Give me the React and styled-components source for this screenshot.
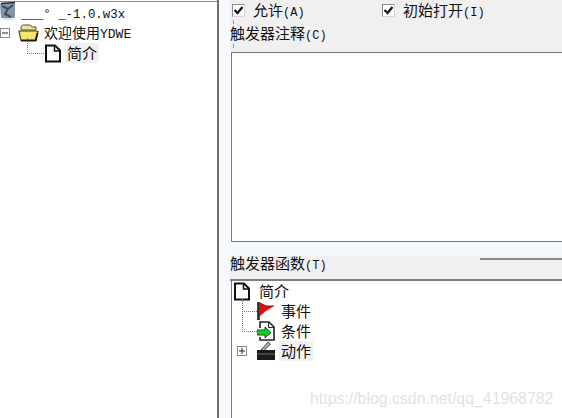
import React from 'react';
import styled, { createGlobalStyle } from 'styled-components';

const GlobalStyle = createGlobalStyle`
  html, body { margin: 0; padding: 0; background: #fff; }
  body { font-family: "Noto Sans CJK SC", "Liberation Mono", monospace; font-size: 15px; color: #111; }
`;

const Page = styled.div`
  position: relative;
  display: flex;
  width: 562px;
  height: 418px;
  overflow: hidden;
  background: #fff;
`;

const LeftPane = styled.div`
  width: 217px;
  height: 416px;
  margin-top: 1px;
  flex: none;
  box-sizing: border-box;
  padding-top: 1px;
  border-top: 1px solid #8a8a8a;
  background: #fff;
`;

const Divider = styled.div`
  width: 2px;
  flex: none;
  background: #6e6e6e;
`;

const Gutter = styled.div`
  width: 11px;
  flex: none;
  background: #f6f9fd;
`;

const RightPane = styled.div`
  flex: 1;
  min-width: 0;
  display: flex;
  flex-direction: column;
`;

const OptionsPanel = styled.div`
  height: 52px;
  flex: none;
  box-sizing: border-box;
  background: #f0f0f0;
`;

const CheckRow = styled.div`
  display: flex;
  height: 20px;
  align-items: center;
  padding-left: 2px;
`;

const CheckItem = styled.label`
  display: flex;
  align-items: center;
  width: 150px;
  gap: 8px;
`;

const Box = styled.span`
  width: 11px;
  height: 11px;
  flex: none;
  display: flex;
  border: 1px solid #8a8a8a;
  border-right-color: #d8d8d8;
  border-bottom-color: #d8d8d8;
  background: #fff;
`;

const Label = styled.span`
  display: block;
  height: 20px;
  line-height: 20px;
  white-space: nowrap;
`;

const Caption = styled(Label)`
  position: relative;
  margin-top: 3px;
  &::before,
  &::after {
    content: '';
    position: absolute;
    left: 3px;
    width: 1px;
    height: 4px;
    background: #9a9a9a;
  }
  &::before { top: -3px; }
  &::after { top: 21px; }
`;

const Notes = styled.div`
  height: 188px;
  flex: none;
  margin-left: 1px;
  border: 1px solid #7a7a7a;
  border-right: none;
  background: #fff;
`;

const LightStrip = styled.div`
  height: 14px;
  flex: none;
  background: #f5f8fd;
`;

const FunctionHeader = styled.div`
  height: 23px;
  flex: none;
  display: flex;
  align-items: flex-start;
  background: #f0f0f0;
  border-bottom: 2px solid #808080;
`;

const HeaderTitle = styled(Label)`
  margin-top: -3px;
`;

const HeaderRule = styled.div`
  width: 82px;
  height: 2px;
  margin-left: auto;
  margin-top: 2px;
  background: #8a8a8a;
`;

const FunctionTree = styled.div`
  flex: 1;
  margin-left: 1px;
  border-left: 1px solid #7a7a7a;
  background: #fff;
`;

const Row = styled.div`
  display: flex;
  align-items: center;
  height: 20px;
  padding-left: ${p => p.$indent || 0}px;
`;

const Text = styled.span`
  margin-left: ${p => p.$gap ?? 4}px;
  padding: 0 2px;
  line-height: 20px;
  white-space: nowrap;
  background: ${p => (p.$active ? '#f1f1f1' : 'transparent')};
`;

const Narrow = styled.span`
  font-size: 14px;
`;

const Latin = styled.span`
  font-family: "Liberation Mono", monospace;
  font-size: ${p => p.$size || 12}px;
`;

const Connector = styled.span`
  width: ${p => p.$w}px;
  height: ${p => p.$h}px;
  flex: none;
  align-self: flex-end;
  margin-bottom: 9px;
  border-left: 1px dotted #777;
  border-bottom: 1px dotted #777;
`;

const Expander = styled.span`
  width: 8px;
  height: 8px;
  flex: none;
  display: flex;
  align-items: center;
  justify-content: center;
  margin-right: ${p => p.$right || 0}px;
  border: 1px solid #888;
  background: #fff;
`;

const Watermark = styled.div`
  position: absolute;
  left: 310px;
  top: 389px;
  font-family: "Liberation Sans", Arial, sans-serif;
  font-size: 15.86px;
  line-height: 20px;
  color: #e3e3e3;
  white-space: nowrap;
`;

const Check = () => (
  <svg width="11" height="11" viewBox="0 0 11 11">
    <path d="M1.5 5l3 3L9.5 2" fill="none" stroke="#111" strokeWidth="2.2" />
  </svg>
);

const Sign = ({ plus }) => (
  <svg width="6" height="6" viewBox="0 0 6 6">
    <path d={plus ? 'M0 3h6M3 0v6' : 'M0 3h6'} stroke="#222" strokeWidth="1" />
  </svg>
);

const DocIcon = () => (
  <svg width="18" height="19" viewBox="0 0 18 19" style={{ flex: 'none' }}>
    <path d="M2 1.5h9l5 5v11H2z" fill="#fff" stroke="#111" strokeWidth="2" />
    <path d="M10.5 1.5v5.5H16" fill="none" stroke="#111" strokeWidth="1.5" />
  </svg>
);

const MapIcon = () => (
  <svg width="17" height="20" viewBox="0 0 17 20" style={{ flex: 'none', marginTop: '-2px' }}>
    <path d="M0 2l15-1v15H1z" fill="#8496a8" />
    <path d="M2 4l6 3-3 5 6 3M8 7l5-4" fill="none" stroke="#3d4e60" strokeWidth="2" />
    <path d="M1 1.5L15 .5" stroke="#222" strokeWidth="1.5" />
    <path d="M3 17h10" stroke="#bbb" strokeWidth="1" />
  </svg>
);

const FolderIcon = () => (
  <svg width="21" height="18" viewBox="0 0 21 18" style={{ flex: 'none' }}>
    <path d="M3 5V2.5L5 1h7l2 2h4v3H3z" fill="#efe3a0" stroke="#5c5320" />
    <path d="M1 7h17l2 .5-2 9H3z" fill="#f6e670" stroke="#4a4310" strokeWidth="1.2" />
    <path d="M3 16.5h14.5L19.5 9" fill="none" stroke="#1c1a08" strokeWidth="1.8" />
  </svg>
);

const FlagIcon = () => (
  <svg width="18" height="20" viewBox="0 0 18 20" style={{ flex: 'none' }}>
    <path d="M1.5 1v18" stroke="#222" strokeWidth="2.6" />
    <path d="M3 2l6 3 8 0-8 5-6 5z" fill="#e01010" />
    <path d="M3 2l6 3 8 0" fill="none" stroke="#8a1010" strokeWidth="1" />
  </svg>
);

const ConditionIcon = () => (
  <svg width="18" height="20" viewBox="0 0 18 20" style={{ flex: 'none' }}>
    <path d="M3 7V1h9l5 5v13H3v-3" fill="#fff" stroke="#222" strokeWidth="1.6" />
    <path d="M11.5 1v5.5H17" fill="none" stroke="#222" />
    <path d="M0 9h8V6l6 5.5-6 5.5v-3H0z" fill="#12d024" stroke="#0b5a12" strokeWidth="1" />
  </svg>
);

const ClapperIcon = () => (
  <svg width="18" height="20" viewBox="0 0 18 20" style={{ flex: 'none' }}>
    <path d="M4 9l7-8 2.5 2-7 7z" fill="#b0b0b0" stroke="#444" strokeWidth="1" />
    <path d="M0 9h18v10H0z" fill="#1a1a1a" />
    <path d="M0 13h18" stroke="#6a6a6a" strokeWidth="1" />
  </svg>
);

export default function App() {
  return (
    <Page>
      <GlobalStyle />
      <LeftPane>
        <Row>
          <MapIcon />
          <Text $gap={2}><Latin $size={12.4}>___° _-1.0.w3x</Latin></Text>
        </Row>
        <Row>
          <Expander $right={8}><Sign /></Expander>
          <FolderIcon />
          <Text $gap={3}><Narrow>欢迎使用</Narrow><Latin $size={13}>YDWE</Latin></Text>
        </Row>
        <Row $indent={27}>
          <Connector $w={16} $h={15} />
          <DocIcon />
          <Text $gap={3} $active>简介</Text>
        </Row>
      </LeftPane>
      <Divider />
      <Gutter />
      <RightPane>
        <OptionsPanel>
          <CheckRow>
            <CheckItem>
              <Box><Check /></Box>
              <Label>允许<Latin>(A)</Latin></Label>
            </CheckItem>
            <CheckItem>
              <Box><Check /></Box>
              <Label>初始打开<Latin>(I)</Latin></Label>
            </CheckItem>
          </CheckRow>
          <Caption>触发器注释<Latin>(C)</Latin></Caption>
        </OptionsPanel>
        <Notes />
        <LightStrip />
        <FunctionHeader>
          <HeaderTitle>触发器函数<Latin>(T)</Latin></HeaderTitle>
          <HeaderRule />
        </FunctionHeader>
        <FunctionTree>
          <Row $indent={1}>
            <DocIcon />
            <Text $gap={6}>简介</Text>
          </Row>
          <Row $indent={10}>
            <Connector $w={14} $h={12} />
            <FlagIcon />
            <Text $gap={4}>事件</Text>
          </Row>
          <Row $indent={10}>
            <Connector $w={14} $h={20} />
            <ConditionIcon />
            <Text $gap={4}>条件</Text>
          </Row>
          <Row $indent={5}>
            <Expander $right={10}><Sign plus /></Expander>
            <ClapperIcon />
            <Text $gap={4} $active>动作</Text>
          </Row>
        </FunctionTree>
      </RightPane>
      <Watermark>https://blog.csdn.net/qq_41968782</Watermark>
    </Page>
  );
}
